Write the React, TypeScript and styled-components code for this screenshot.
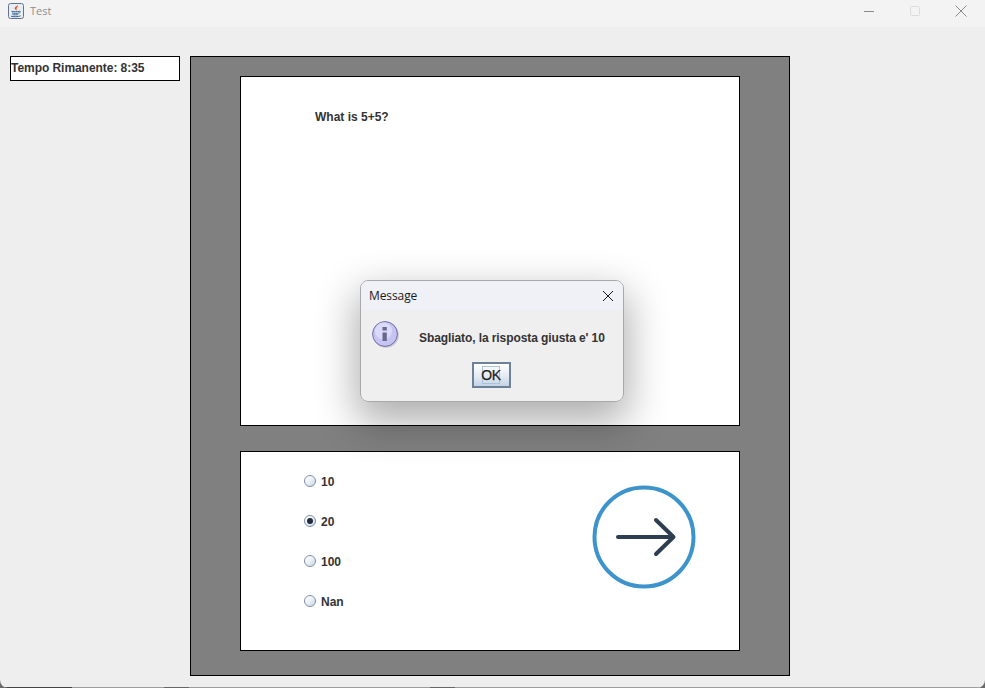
import React from "react";
import styled, { createGlobalStyle } from "styled-components";

//////////////////////// GLOBAL ////////////////////////

const GlobalStyle = createGlobalStyle`
  html, body {
    margin: 0;
    padding: 0;
    width: 985px;
    height: 688px;
    overflow: hidden;
    background: #6a6a6a;
    font-family: "Liberation Sans", Arial, sans-serif;
  }
`;

//////////////////////// STYLED-COMPONENTS ////////////////////////

const Frame = styled.div`
  position: relative;
  display: flex;
  flex-direction: column;
  width: 985px;
  height: 688px;
  overflow: hidden;
  background: #eeeeee;
  border-radius: 0 0 8px 8px;
`;

const TitleBar = styled.div`
  display: flex;
  align-items: center;
  flex: 0 0 27px;
  height: 27px;
  padding: 0 0 6px 8px;
  box-sizing: border-box;
  background: #f3f3f3;
`;

const TitleText = styled.span`
  margin-left: 6px;
  font-family: "Segoe UI", "Open Sans", sans-serif;
  font-size: 11px;
  color: #8e8e8e;
`;

const WindowButtons = styled.div`
  display: flex;
  align-items: center;
  margin-left: auto;
  padding-right: 1px;
`;

const WindowButton = styled.div`
  display: flex;
  align-items: center;
  justify-content: center;
  width: 46px;
  height: 20px;
`;

const Content = styled.div`
  display: flex;
  align-items: flex-start;
  gap: 10px;
  padding: 29px 0 0 10px;
`;

const Timer = styled.div`
  width: 170px;
  height: 25px;
  box-sizing: border-box;
  border: 1px solid #000;
  background: #fff;
  font-size: 12px;
  font-weight: 700;
  line-height: 23px;
  letter-spacing: -0.05px;
  color: #333;
`;

const GrayPanel = styled.div`
  display: flex;
  flex-direction: column;
  align-items: center;
  gap: 25px;
  width: 600px;
  height: 620px;
  box-sizing: border-box;
  padding-top: 19px;
  border: 1px solid #000;
  background: #808080;
`;

const QuestionCard = styled.div`
  width: 500px;
  height: 350px;
  box-sizing: border-box;
  padding: 33px 0 0 74px;
  border: 1px solid #000;
  background: #fff;
  font-size: 12px;
  font-weight: 700;
  color: #333;
`;

const AnswerCard = styled.div`
  display: flex;
  justify-content: space-between;
  width: 500px;
  height: 200px;
  box-sizing: border-box;
  padding: 10px 42px 0 63px;
  border: 1px solid #000;
  background: #fff;
`;

const Options = styled.div`
  display: flex;
  flex-direction: column;
`;

const Option = styled.div`
  display: flex;
  align-items: center;
  gap: 5px;
  height: 40px;
  font-size: 12px;
  font-weight: 700;
  color: #333;
`;

const Radio = styled.span<{ $checked?: boolean }>`
  display: flex;
  align-items: center;
  justify-content: center;
  width: 12px;
  height: 12px;
  margin-bottom: 2px;
  box-sizing: border-box;
  border: 1px solid #7d8fa5;
  border-radius: 50%;
  background: linear-gradient(135deg, #ffffff 15%, #e3ebf3 60%, #c3d3e3 100%);

  &::after {
    content: "";
    display: ${({ $checked }) => ($checked ? "block" : "none")};
    width: 6px;
    height: 6px;
    border-radius: 50%;
    background: #232b3a;
  }
`;

const NextIcon = styled.svg`
  margin-top: 22px;
`;

const Dialog = styled.div`
  position: absolute;
  left: 360px;
  top: 280px;
  display: flex;
  flex-direction: column;
  width: 264px;
  height: 122px;
  box-sizing: border-box;
  overflow: hidden;
  border: 1px solid #a9a9ab;
  border-radius: 8px;
  background: #efefef;
`;

const DialogShadow = styled.div`
  position: absolute;
  left: 360px;
  top: 280px;
  width: 264px;
  height: 122px;
  border-radius: 8px;
  box-shadow: 0 16px 40px 4px rgba(0, 0, 0, 0.32);
`;

const DialogTitle = styled.div`
  display: flex;
  align-items: center;
  justify-content: space-between;
  flex: 0 0 29px;
  padding: 0 9px 0 8px;
  background: #f0f1f7;
  font-family: "Segoe UI", "Open Sans", sans-serif;
  font-size: 12px;
  letter-spacing: -0.1px;
  color: #1a1a1a;
`;

const DialogBody = styled.div`
  display: flex;
  align-items: flex-start;
  padding: 10px 0 0 10px;
`;

const DialogMessage = styled.div`
  margin: 11px 0 0 20px;
  font-size: 12px;
  font-weight: 700;
  letter-spacing: -0.09px;
  color: #333;
  white-space: nowrap;
`;

const DialogActions = styled.div`
  display: flex;
  justify-content: center;
  padding-top: 14px;
  padding-right: 2px;
`;

const OkButton = styled.div`
  display: flex;
  align-items: center;
  justify-content: center;
  width: 39px;
  height: 26px;
  box-sizing: border-box;
  border: 2px solid #6d8199;
  background: linear-gradient(180deg, #ffffff 0%, #e4ebf3 55%, #c4d4e5 100%);
  font-size: 14px;
  color: #222;

  span {
    display: flex;
    align-items: center;
    justify-content: center;
    width: 18px;
    height: 18px;
    box-sizing: border-box;
    border: 1px solid #a9c2da;
    letter-spacing: -0.4px;
    -webkit-text-stroke: 0.25px #222;
  }
`;

const BottomEdge = styled.div`
  position: absolute;
  left: 0;
  right: 0;
  bottom: 0;
  display: flex;
  height: 1px;
  background: #9c9c9c;
`;

const EdgeSegment = styled.div<{ $width: number; $color: string }>`
  flex: 0 0 ${({ $width }) => $width}px;
  background: ${({ $color }) => $color};
`;

//////////////////////// ICONS ////////////////////////

const JavaIcon = () => (
  <svg width="16" height="16" viewBox="0 0 16 16">
    <rect x="0.5" y="0.5" width="15" height="15" rx="2" fill="#e8edf3" stroke="#62748c" />
    <path d="M9.500 1.800c1.500 1.800-1.800 3-.8 5 .2.400.4.600.4.600-1.800-.5-3-1.500-2.200-2.900.7-1.100 2.900-1.300 2.600-2.700z" fill="#e0561a" />
    <path d="M11.200 4c-1.200.6-1.800 1.200-1.100 2.400-1.100-1-.5-1.900 1.100-2.400z" fill="#e8893a" />
    <path d="M3.500 8.300c1.600.5 6 .5 7.500 0M4 10c1.500.5 5.500.5 7 0M4.500 11.600c1.300.4 4.300.4 5.600 0M3 13.200c2.200.7 7.500.7 9.600-.4M11 8.300c1.500-.5 2 .9.300 1.700" fill="none" stroke="#3a6690" strokeWidth="1" />
  </svg>
);

const InfoIcon = () => (
  <svg width="28" height="28" viewBox="0 0 28 28">
    <circle cx="15" cy="15" r="12.800" fill="#8f8f9c" opacity="0.4" />
    <circle cx="14" cy="14" r="12.400" fill="#c6c4f2" stroke="#6f6ca8" strokeWidth="1" />
    <circle cx="12.500" cy="11" r="8.500" fill="#dcdafa" />
    <rect x="11.500" y="7" width="4.300" height="3.500" fill="#68688e" />
    <rect x="11.500" y="12.500" width="4.300" height="8.500" fill="#68688e" />
  </svg>
);

//////////////////////// COMPONENT ////////////////////////

const answers = [
  { label: "10" },
  { label: "20", checked: true },
  { label: "100" },
  { label: "Nan" },
];

const App = () => {
  return (
    <>
      <GlobalStyle />
      <Frame>
        <TitleBar>
          <JavaIcon />
          <TitleText>Test</TitleText>
          <WindowButtons>
            <WindowButton>
              <svg width="12" height="12" viewBox="0 0 12 12">
                <path d="M1 6.500h10" stroke="#8a8a8a" strokeWidth="1" />
              </svg>
            </WindowButton>
            <WindowButton>
              <svg width="12" height="12" viewBox="0 0 12 12">
                <rect x="1.500" y="1.500" width="9" height="9" rx="1" fill="none" stroke="#dcdcdc" />
              </svg>
            </WindowButton>
            <WindowButton>
              <svg width="14" height="14" viewBox="0 0 14 14">
                <path d="M1.500 1.500l11 11M12.500 1.500l-11 11" stroke="#8a8a8a" strokeWidth="1" />
              </svg>
            </WindowButton>
          </WindowButtons>
        </TitleBar>
        <Content>
          <Timer>Tempo Rimanente: 8:35</Timer>
          <GrayPanel>
            <QuestionCard>What is 5+5?</QuestionCard>
            <AnswerCard>
              <Options>
                {answers.map((answer) => (
                  <Option key={answer.label}>
                    <Radio $checked={answer.checked} />
                    {answer.label}
                  </Option>
                ))}
              </Options>
              <NextIcon width="106" height="106" viewBox="0 0 106 106">
                <circle cx="53" cy="53" r="49.500" fill="none" stroke="#3d94cd" strokeWidth="4" />
                <path d="M27 53h55M65 36l17.500 17L65 70" fill="none" stroke="#2c3e50" strokeWidth="4" strokeLinecap="round" strokeLinejoin="round" />
              </NextIcon>
            </AnswerCard>
          </GrayPanel>
        </Content>
        <DialogShadow />
        <Dialog>
          <DialogTitle>
            Message
            <svg width="12" height="12" viewBox="0 0 12 12">
              <path d="M1 1l10 10M11 1L1 11" stroke="#1a1a1a" strokeWidth="1" />
            </svg>
          </DialogTitle>
          <DialogBody>
            <InfoIcon />
            <DialogMessage>Sbagliato, la risposta giusta e' 10</DialogMessage>
          </DialogBody>
          <DialogActions>
            <OkButton>
              <span>OK</span>
            </OkButton>
          </DialogActions>
        </Dialog>
        <BottomEdge>
          <EdgeSegment $width={72} $color="#444444" />
          <EdgeSegment $width={92} $color="#9c9c9c" />
          <EdgeSegment $width={25} $color="#666666" />
          <EdgeSegment $width={241} $color="#9c9c9c" />
          <EdgeSegment $width={25} $color="#666666" />
        </BottomEdge>
      </Frame>
    </>
  );
};

//////////////////////// EXPORT ////////////////////////

export default App;
